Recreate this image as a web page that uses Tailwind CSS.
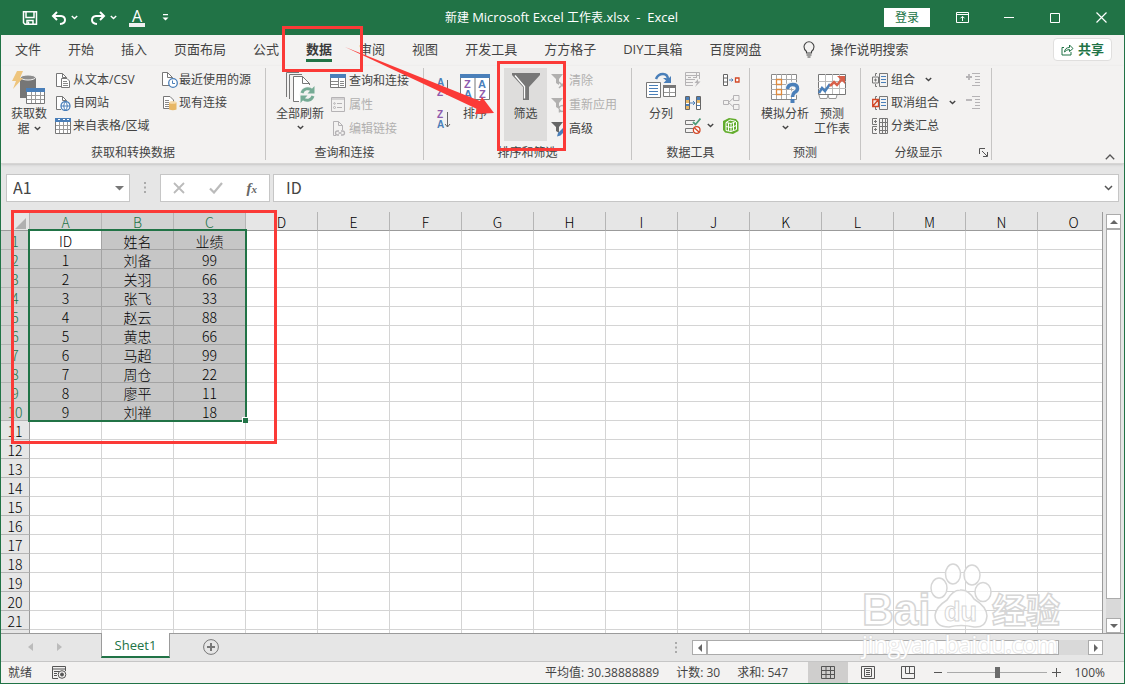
<!DOCTYPE html>
<html lang="zh-CN">
<head>
<meta charset="utf-8">
<title>新建 Microsoft Excel 工作表.xlsx - Excel</title>
<script src="https://cdn.jsdelivr.net/npm/@tailwindcss/browser@4"></script>
</head>
<body class="relative flex h-screen flex-col overflow-hidden border-x border-b border-[#217346] bg-[#e6e6e6] font-['Open_Sans','Noto_Sans_CJK_SC',sans-serif] text-xs text-[#444]">

<svg class="hidden">
  <symbol id="chev" viewBox="0 0 7 5"><path d="M.8 1 3.5 3.6 6.2 1" fill="none" stroke="currentColor" stroke-width="1.4"/></symbol>
  <symbol id="page" viewBox="0 0 16 16"><path d="M1.500 14.500V1.500H7.500L11.500 5.500V14.500Z" fill="#fff"/><path d="M6 14.500H1.500V1.500H7.500L11.500 5.500V7M7.500 1.500V5.500H11.500" fill="none" stroke="#777"/></symbol>
  <symbol id="funnel" viewBox="0 0 16 16"><path d="M0 1H12L8 6V12L5 10V6Z" fill="currentColor"/></symbol>
</svg>

<!-- Title bar -->
<header class="flex h-[35px] shrink-0 items-center bg-[#217346] text-white">
  <div class="flex w-[444px] shrink-0 items-center pl-[21px]">
    <button aria-label="保存" class="mr-[13px]"><svg width="16" height="16" viewBox="0 0 16 16" fill="none" stroke="#fff" stroke-width="1.5"><path d="M1.500 1.800H14.500V14.200H3L1.500 12.700Z"/><path d="M4 2V7.500H12V2M5 14V10.500H11V14"/><path d="M6.500 11.500V14" /></svg></button>
    <button aria-label="撤消"><svg width="16" height="16" viewBox="0 0 16 16" fill="none" stroke="#fff" stroke-width="2"><path d="M6 2 2 6 6 10M2.500 6H10Q14 6.500 14 10T9 14"/></svg></button>
    <button aria-label="撤消选项" class="mr-3 ml-1"><svg width="7" height="5"><use href="#chev"/></svg></button>
    <button aria-label="恢复"><svg width="16" height="16" viewBox="0 0 16 16" fill="none" stroke="#fff" stroke-width="2"><path d="M10 2 14 6 10 10M13.500 6H6Q2 6.500 2 10T7 14"/></svg></button>
    <button aria-label="恢复选项" class="mr-3 ml-1"><svg width="7" height="5"><use href="#chev"/></svg></button>
    <button aria-label="字体颜色" class="h-[18px] w-4 border-b-4 border-[#f0f0f0] text-center text-base leading-[14px]">A</button>
    <button aria-label="自定义快速访问工具栏" class="ml-[17px]"><svg width="7" height="7" viewBox="0 0 7 7" fill="#fff"><path d="M1 0H6V1.300H1ZM.5 3.500H6.500L3.500 6.500Z"/></svg></button>
  </div>
  <h1 class="whitespace-pre text-xs">新建 <span class="text-[13px]">Microsoft Excel </span>工作表<span class="text-[13px]">.xlsx  -  Excel</span></h1>
  <div class="flex flex-1 items-center justify-end pr-[17px]">
    <button class="h-[19px] w-[46px] bg-white leading-[18px] text-[#217346]">登录</button>
    <button aria-label="功能区显示选项" class="ml-[26px]"><svg width="13" height="11" viewBox="0 0 13 11" fill="none" stroke="#fff"><path d="M.5.5H12.500V10.500H.5ZM.5 2.500H12.500M6.500 9V4.500M4.500 6.300 6.500 4.300 8.500 6.300"/></svg></button>
    <button aria-label="最小化" class="ml-[35px]"><svg width="10" height="11" viewBox="0 0 10 11" stroke="#fff"><path d="M0 5.500H10"/></svg></button>
    <button aria-label="最大化" class="ml-9"><svg width="10" height="10" viewBox="0 0 10 10" fill="none" stroke="#fff"><path d="M.5.5H9.500V9.500H.5Z"/></svg></button>
    <button aria-label="关闭" class="ml-9"><svg width="11" height="11" viewBox="0 0 11 11" stroke="#fff" stroke-width="1.200"><path d="M.5.5 10.500 10.500M10.500.5.5 10.500"/></svg></button>
  </div>
</header>

<!-- Ribbon tabs -->
<nav class="flex h-[31px] shrink-0 items-center gap-[27px] bg-[#f3f2f1] pr-3 pb-0.5 pl-3.5 text-[13px] whitespace-nowrap">
  <button>文件</button><button>开始</button><button>插入</button><button>页面布局</button><button>公式</button>
  <button class="relative font-bold text-[#3b3b3b]">数据<span class="absolute inset-x-0 -bottom-1 h-[3px] bg-[#217346]"></span></button>
  <button>审阅</button><button>视图</button><button>开发工具</button><button>方方格子</button><button>DIY工具箱</button><button>百度网盘</button>
  <button class="ml-3.5 flex items-center gap-4"><svg width="12" height="17" viewBox="0 0 12 17" fill="none" stroke="currentColor" stroke-width="1.100"><path d="M3.500 12V10.500Q1 8.500 1 5.800A5 5 0 0 1 11 5.800Q11 8.500 8.500 10.500V12ZM3.500 14H8.500M4.500 16H7.500"/></svg>操作说明搜索</button>
  <button class="ml-auto flex h-[23px] w-[59px] items-center justify-center gap-1 rounded-sm border border-[#e0dfde] bg-white font-bold text-[#217346]"><svg width="13" height="13" viewBox="0 0 13 13" fill="none" stroke="currentColor"><path d="M3 4.500H1V12H10V9M3.500 9Q4 4.500 8.500 4.500V2L12 5.500 8.500 8.500V6.500Q5.500 6.500 3.500 9Z"/></svg>共享</button>
</nav>

<!-- Ribbon -->
<section class="flex h-[98px] shrink-0 border-b border-[#d6d5d4] bg-[#f3f2f1] pt-0.5 whitespace-nowrap shadow">
  <div class="flex h-[92px] w-[265px] shrink-0 flex-col justify-between border-r border-[#c6c5c4]">
    <div class="flex">
      <button class="flex h-[73px] w-[54px] flex-col items-center pt-[3px] pl-0.5 leading-[15px]">
        <svg width="34" height="33" viewBox="0 0 34 33"><path d="M8 7Q16 2 24 7V27H8Z" fill="#767676"/><ellipse cx="16" cy="6.500" rx="7.500" ry="2.500" fill="#8e8e8e" stroke="#f3f2f1"/><path d="M5 0H11L8 7H11L1 18 4 10H0Z" fill="#eec57d"/><path d="M14.500 17.500H32.500V32.500H14.500Z" fill="#fff" stroke="#777"/><path d="M14 17H33V21H14Z" fill="#4a7fb9"/><path d="M15 24.500H32M15 28.500H32M19.500 21V32M23.500 21V32M28.500 21V32" stroke="#999"/></svg>
        <span class="mt-0.5">获取数</span><span class="flex items-center gap-1">据 <svg width="7" height="5"><use href="#chev"/></svg></span>
      </button>
      <div class="w-[107px]">
        <button class="flex h-[23px] items-center gap-0.5"><svg width="16" height="16"><use href="#page"/><path d="M6.500 6.500H12L14.500 9V15.500H6.500Z" fill="#fff" stroke="#777"/><path d="M8 9.500H12M8 11.500H13M8 13.500H13" stroke="#888"/></svg>从文本/CSV</button>
        <button class="flex h-[23px] items-center gap-0.5"><svg width="16" height="16"><use href="#page"/><circle cx="10.500" cy="11" r="4.500" fill="#fff" stroke="#4a7fb9" stroke-width="1.300"/><path d="M6 11H15M10.500 6.500Q7 11 10.500 15.500Q14 11 10.500 6.500" fill="none" stroke="#4a7fb9"/></svg>自网站</button>
        <button class="flex h-[23px] items-center gap-0.5"><svg width="16" height="16"><path d="M.5.5H15.500V15.500H.5Z" fill="#fff" stroke="#777"/><path d="M0 0H16V4H0Z" fill="#4a7fb9"/><path d="M3 1.500H5M8 1.500H10M12 1.500H14" stroke="#fff"/><path d="M1 7.500H15M1 11.500H15M4.500 4V15M8.500 4V15M12.500 4V15" stroke="#999"/></svg>来自表格/区域</button>
      </div>
      <div>
        <button class="flex h-[23px] items-center"><svg width="17" height="16"><path d="M0.500 13.500V.5H5.500L10.500 5.500V13.500Z" fill="#fff" stroke="#777"/><path d="M5.500.5V5.500H10.500" fill="none" stroke="#777"/><circle cx="11" cy="11" r="4.300" fill="#fff" stroke="#4a7fb9" stroke-width="1.300"/><path d="M10.500 8.500V11.500H13" fill="none" stroke="#4a7fb9"/></svg>最近使用的源</button>
        <button class="flex h-[23px] items-center"><svg width="17" height="16"><path d="M1.500 1.500H8L11.500 5V13.500H1.500Z" fill="#fff" stroke="#777"/><path d="M3 5.500H7M3 7.500H7M3 9.500H7M3 11.500H7" stroke="#888"/><path d="M7 7.500Q11 5.500 14.500 7.500V14.500Q11 16 7 14.500Z" fill="#e8b765"/><ellipse cx="10.700" cy="7.500" rx="3.700" ry="1.300" fill="#f6dcae"/></svg>现有连接</button>
      </div>
    </div>
    <div class="h-4 text-center leading-[18px]">获取和转换数据</div>
  </div>

  <div class="flex h-[92px] w-[158px] shrink-0 flex-col justify-between border-r border-[#c6c5c4]">
    <div class="flex pl-1.5">
      <button class="flex h-[73px] w-14 flex-col items-center pt-[3px] leading-[15px]">
        <svg width="32" height="33" viewBox="0 0 32 33"><path d="M2.500 26V1.500H15M5.500 28V3.500H18" fill="none" stroke="#777"/><path d="M9.500 30.500V5.500H18.500L25.500 12.500V30.500Z" fill="#fff"/><path d="M15 30.500H9.500V5.500H18.500L25.500 12.500V14M18.500 5.500V12.500H25.500" fill="none" stroke="#777"/><circle cx="23.500" cy="23.500" r="8" fill="#f3f2f1"/><path d="M18 22A6 6 0 0 1 28 19.500M29 25A6 6 0 0 1 19 27.500" fill="none" stroke="#76ab95" stroke-width="3"/><path d="M30.500 15V22.500H23.500ZM16.500 32V24.500H23.500Z" fill="#76ab95"/></svg>
        <span class="mt-0.5">全部刷新</span><svg class="mt-1" width="7" height="5"><use href="#chev"/></svg>
      </button>
      <div class="pt-px pl-0.5">
        <button class="flex h-6 items-center gap-[3px]"><svg width="16" height="14"><path d="M.5.5H15.500V13.500H.5Z" fill="#fff" stroke="#777"/><path d="M0 0H16V4H0Z" fill="#4a7fb9"/><path d="M1 7.500H8M1 10.500H8M8.500 4V13M10 7.500H14M10 9.500H14M10 11.500H14" stroke="#888"/></svg>查询和连接</button>
        <button class="flex h-6 items-center gap-[3px] text-[#b1b0af]" disabled><svg width="16" height="16" fill="none" stroke="#b5b3b5"><path d="M1.500.5H14.500V14.500H1.500ZM1.500 2H14.500M7 6.500H12M7 10.500H12"/><circle cx="4.500" cy="6.500" r=".8"/><circle cx="4.500" cy="10.500" r="1"/></svg>属性</button>
        <button class="flex h-6 items-center gap-[3px] text-[#b1b0af]" disabled><svg width="16" height="16"><path d="M6 14.500H3.500V.5H8.500L12.500 4.500V9M8.500.5V4.500H12.500" fill="none" stroke="#b5b3b5"/><path d="M9 14H7.500A2 2 0 0 1 7.500 10H9M11 10H12.500A2 2 0 0 1 12.500 14H11M8.500 12H11.500" fill="none" stroke="#b5b3b5" stroke-width="1.300"/></svg>编辑链接</button>
      </div>
    </div>
    <div class="h-4 text-center leading-[18px]">查询和连接</div>
  </div>

  <div class="flex h-[92px] w-52 shrink-0 flex-col justify-between border-r border-[#c6c5c4]">
    <div class="flex pl-3">
      <div class="flex w-4 flex-col gap-3 pt-[10px]">
        <button aria-label="升序"><svg width="16" height="20" font-family="Liberation Sans" font-size="10" font-weight="bold"><text x="1" y="8" fill="#4a7fb9">A</text><text x="1" y="18" fill="#8e5aad">Z</text><path d="M11.500 2V17M9 14 11.500 17 14 14" fill="none" stroke="#666"/></svg></button>
        <button aria-label="降序"><svg width="16" height="20" font-family="Liberation Sans" font-size="10" font-weight="bold"><text x="1" y="8" fill="#8e5aad">Z</text><text x="1" y="18" fill="#4a7fb9">A</text><path d="M11.500 2V17M9 14 11.500 17 14 14" fill="none" stroke="#666"/></svg></button>
      </div>
      <button class="flex h-[73px] w-[46px] flex-col items-center pt-[3px] leading-[15px]">
        <svg width="30" height="33" viewBox="0 0 30 33" font-family="Liberation Sans" font-size="11" font-weight="bold"><path d="M.5 3.500H29.500V28.500H.5ZM15 6V28" fill="#fff" stroke="#777"/><path d="M0 3H30V7H0Z" fill="#4a7fb9"/><g fill="#8e5aad"><text x="4" y="17">Z</text><text x="19" y="27">Z</text></g><g fill="#4a7fb9"><text x="4" y="27">A</text><text x="18" y="17">A</text></g></svg>
        <span class="mt-0.5">排序</span>
      </button>
      <button class="ml-1.5 flex h-[73px] w-[43px] flex-col items-center bg-[#dedddc] pt-[3px] leading-[15px]">
        <svg width="28" height="33" viewBox="0 0 28 33"><path d="M0 2H28V4L17 16V29H11V16L0 4Z" fill="#777"/><path d="M3 4.500 12.500 15.500V27.500" fill="none" stroke="#fff" stroke-width="1.300"/></svg>
        <span class="mt-0.5">筛选</span>
      </button>
      <div class="pt-px pl-1">
        <button class="flex h-6 items-center gap-0.5 text-[#b1b0af]" disabled><svg width="16" height="16"><use href="#funnel"/><path d="M8 9 14 15M14 9 8 15" stroke="#b1b0af" stroke-width="1.500"/></svg>清除</button>
        <button class="flex h-6 items-center gap-0.5 text-[#b1b0af]" disabled><svg width="16" height="16"><use href="#funnel"/><path d="M8 11A3 3 0 0 1 13.500 10V7.500M14 12A3 3 0 0 1 8.500 13V15.500" fill="none" stroke="#b1b0af" stroke-width="1.500"/></svg>重新应用</button>
        <button class="flex h-6 items-center gap-0.5"><svg width="16" height="16"><use href="#funnel" color="#666"/><path d="M6 15.500 7 12 12 7 14.500 9.500 9.500 14.500Z" fill="#4a7fb9"/></svg>高级</button>
      </div>
    </div>
    <div class="h-4 text-center leading-[18px]">排序和筛选</div>
  </div>

  <div class="flex h-[92px] w-[118px] shrink-0 flex-col justify-between border-r border-[#c6c5c4]">
    <div class="flex pl-2">
      <button class="flex h-[73px] w-[42px] flex-col items-center pt-[3px] leading-[15px]">
        <svg width="30" height="33" viewBox="0 0 30 33"><path d="M.5 11.500H14.500V26.500H.5Z" fill="#fff" stroke="#777"/><path d="M3 14.500H12M3 17.500H12M3 20.500H12M3 23.500H12" stroke="#4a7fb9"/><path d="M17.500 14.500H29.500V25.500H17.500Z" fill="#fff" stroke="#777"/><path d="M17 14H30V17H17Z" fill="#777"/><path d="M18 21.500H29M23.500 17V25" stroke="#999"/><path d="M10 8Q12 3 17 3Q21.500 3 22 8" fill="none" stroke="#4a7fb9" stroke-width="2.500"/><path d="M17 7H20L22 8 25 5V12H17.500L20 9.500Z" fill="#4a7fb9"/></svg>
        <span class="mt-0.5">分列</span>
      </button>
      <div class="w-[38px] pl-[3px]">
        <button aria-label="快速填充" class="flex h-[23px] items-center"><svg width="16" height="15" fill="none" stroke="#b5b3b5"><path d="M8 13.500H.5V.5H14.500V7M.5 3.500H14M.5 7.500H10M.5 10.500H8M3 5.500H6M8 5.500H12M11.500 1V6"/><path d="M13 7 9.500 11H12L10 15 15.500 9.500H13Z" fill="#b5b3b5" stroke="none"/></svg></button>
        <button aria-label="删除重复值" class="flex h-[23px] items-center"><svg width="16" height="14"><path d="M.5.5H4.500V13.500H.5ZM11.500.5H15.500V13.500H11.500Z" fill="#fff" stroke="#666"/><path d="M1 1H4V4H1ZM1 8H4V10H1ZM12 1H15V4H12Z" fill="#4a7fb9"/><path d="M1 4H4V7H1ZM1 10H4V13H1ZM12 4H15V7H12Z" fill="#e8b765"/><path d="M5 7H10M8 5 10 7 8 9M12 9.500H15" fill="none" stroke="#4a7fb9"/></svg></button>
        <button aria-label="数据验证" class="flex h-[23px] items-center gap-1.5"><svg width="16" height="16"><path d="M10 2.500H.5V6.500H8M8 10.500H.5V14.500H8" fill="none" stroke="#777"/><path d="M8 4 10.500 6.500 15.500.5" fill="none" stroke="#4f9c78" stroke-width="1.800"/><circle cx="11.700" cy="12" r="3.300" fill="#fff" stroke="#d24726" stroke-width="1.300"/><path d="M9.500 10 14 14" stroke="#d24726" stroke-width="1.300"/></svg><svg width="7" height="5"><use href="#chev"/></svg></button>
      </div>
      <div class="pl-[3px]">
        <button aria-label="合并计算" class="flex h-[23px] items-center"><svg width="17" height="12"><path d="M.5.5H4.500V11.500H.5ZM.5 4H4.500M.5 8H4.500" fill="#fff" stroke="#666"/><path d="M6 6H10M8.500 4.500 10 6 8.500 7.500" fill="none" stroke="#4a7fb9"/><path d="M12.500 4H16V8H12.500Z" fill="#fff" stroke="#d24726" stroke-width="1.300"/></svg></button>
        <button aria-label="关系" class="flex h-[23px] items-center" disabled><svg width="17" height="15" fill="none" stroke="#b5b3b5"><path d="M.5 5.500H5.500V9.500H.5ZM10.500.5H16V5.500H10.500ZM10.500 9.500H16V14.500H10.500ZM5.500 7.500 10.500 3M5.500 7.500 10.500 12"/></svg></button>
        <button aria-label="管理数据模型" class="flex h-[23px] items-center"><svg width="16" height="16"><path d="M6 0 13 1 15.500 4V13L10 16 2 14.500 0 12V3Z" fill="#63ad2d"/><path d="M3 4.500 8 5.500 13 3.500 7 2ZM3 4.500V12.500L8 13.500V5.500M8 13.500 13.500 11.500V4M3 8.500 8 9.500 13.500 7.500M5.500 5V13M10.500 5V12.500" fill="none" stroke="#fff"/></svg></button>
      </div>
    </div>
    <div class="h-4 text-center leading-[18px]">数据工具</div>
  </div>

  <div class="flex h-[92px] w-[111px] shrink-0 flex-col justify-between border-r border-[#c6c5c4]">
    <div class="flex pl-2">
      <button class="flex h-[73px] w-[54px] flex-col items-center pt-[3px] leading-[15px]">
        <svg width="30" height="33" viewBox="0 0 30 33"><path d="M1.500 3.500H26.500V28.500H1.500Z" fill="#fff" stroke="#888"/><path d="M1 8.500H27M1 13.500H27M1 18.500H27M1 23.500H27M6.500 3V28M11.500 3V28M16.500 3V28M21.500 3V28" stroke="#aaa"/><path d="M6.500 8.500H11.500V13.500H6.500ZM6.500 18.500H11.500V23.500H6.500Z" fill="#fff" stroke="#e08a3c" stroke-width="1.300"/><path d="M17.500 18Q18 13.500 22.500 13.500Q27.500 13.500 27.500 17.500Q27.500 20 24.500 21.500Q22.500 23 22.500 26" fill="none" stroke="#f3f2f1" stroke-width="6"/><path d="M17.500 18Q18 13.500 22.500 13.500Q27.500 13.500 27.500 17.500Q27.500 20 24.500 21.500Q22.500 23 22.500 26" fill="none" stroke="#4a7fb9" stroke-width="3.500"/><path d="M20.500 28H24.500V32H20.500Z" fill="#4a7fb9"/></svg>
        <span class="mt-0.5">模拟分析</span><svg class="mt-1" width="7" height="5"><use href="#chev"/></svg>
      </button>
      <button class="flex h-[73px] w-[40px] flex-col items-center pt-[3px] leading-[15px]">
        <svg width="28" height="33" viewBox="0 0 28 33"><path d="M.5 3.500H27.500V23.500H.5Z" fill="#fff" stroke="#777"/><path d="M7.500 3V23M14.500 3V23M21.500 3V23M0 10.500H28M0 17.500H28" stroke="#bbb"/><path d="M1 24 2 27.500H9L10 24M10 24 11 27.500H18L19 24" fill="#fff" stroke="#999"/><path d="M1 22 4 17 7 20 12 13" fill="none" stroke="#4a7fb9" stroke-width="2.500"/><path d="M12 15 16 11 19 14 25 7" fill="none" stroke="#d8604a" stroke-width="2.500"/><path d="M19 5H27V13Z" fill="#d8604a"/></svg>
        <span class="mt-0.5">预测</span><span>工作表</span>
      </button>
    </div>
    <div class="h-4 text-center leading-[18px]">预测</div>
  </div>

  <div class="flex h-[92px] w-[131px] shrink-0 flex-col justify-between border-r border-[#c6c5c4]">
    <div class="flex justify-between pr-2.5 pl-[11px]">
      <div>
        <button class="flex h-[23px] items-center gap-[3px]"><svg width="16" height="14" fill="none" stroke="#777"><path d="M5 .5H3.500V3M3.500 11V13.500H5M.5 4H6.500V10H.5ZM2 7H5M3.500 5.500V8.500M7.500.5H15.500V13.500H7.500Z"/><path d="M9 3.500H14M9 6.500H14M9 9.500H14" stroke="#4a7fb9"/></svg>组合<svg class="ml-[7px]" width="7" height="5"><use href="#chev"/></svg></button>
        <button class="flex h-[23px] items-center gap-[3px]"><svg width="16" height="14" fill="none" stroke="#777"><path d="M5 .5H3.500V3M3.500 11V13.500H5M7.500.5H15.500V13.500H7.500Z"/><path d="M.7 3.500H6.500V10.500H.7ZM1 10 6 4" stroke="#d24726" stroke-width="1.300"/><path d="M9 3.500H14M9 6.500H14M9 9.500H14" stroke="#4a7fb9"/></svg>取消组合<svg class="ml-[7px]" width="7" height="5"><use href="#chev"/></svg></button>
        <button class="flex h-[23px] items-center gap-[3px]"><svg width="16" height="16" fill="none" stroke="#777"><path d="M5 .5H.5V6.500H5M5 8.500H.5V15.500H5M2 3.500H5M3.500 2V5M2 11.500H5M3.500 10V13M7.500.5H15.500V15.500H7.500ZM7.500 4.500H15M7.500 8.500H15M7.500 12.500H15M10.500.5V15M13.500.5V15"/></svg>分类汇总</button>
      </div>
      <div>
        <button aria-label="显示明细数据" class="flex h-[23px] items-center" disabled><svg width="15" height="13" fill="none" stroke="#b5b3b5"><path d="M0 4H6M3 1V7" stroke-width="1.800"/><path d="M6 .5H14M9 3.500H14M9 6.500H14M9 9.500H14M6 12.500H14"/></svg></button>
        <button aria-label="隐藏明细数据" class="flex h-[23px] items-center" disabled><svg width="15" height="13" fill="none" stroke="#b5b3b5"><path d="M0 4H6" stroke-width="1.800"/><path d="M6 .5H14M9 3.500H14M9 6.500H14M9 9.500H14M6 12.500H14"/></svg></button>
      </div>
    </div>
    <div class="flex h-4 items-center pr-[3px]"><span class="h-4 flex-1 pr-3.5 pl-[11px] text-center leading-[18px]">分级显示</span><button aria-label="分级显示设置"><svg width="9" height="9" fill="none" stroke="#555"><path d="M.5 6V.5H6M3 3 8 8M8.500 4V8.500H4"/></svg></button></div>
  </div>
  <button aria-label="折叠功能区" class="mr-[9px] mb-[3px] ml-auto self-end"><svg width="10" height="6" fill="none" stroke="#555" stroke-width="1.300"><path d="M.8 5.200 5 1 9.200 5.200"/></svg></button>
</section>

<!-- Formula bar -->
<div class="flex h-12 shrink-0 items-start gap-[3px] pt-2.5 pr-[5px] pl-[5px] font-['Noto_Sans_CJK_SC',sans-serif] text-base">
  <div class="flex h-7 w-[124px] items-center border border-[#c6c6c6] bg-white pr-[5px]">
    <input aria-label="名称框" value="A1" class="h-6 w-full min-w-0 pb-0.5 pl-1.5 outline-none">
    <button aria-label="名称列表"><svg width="9" height="5" fill="#777"><path d="M0 0H9L4.500 4.500Z"/></svg></button>
  </div>
  <div class="flex h-7 w-6 items-center justify-center"><svg width="3" height="12" fill="#aaa"><path d="M0 0H2V2H0ZM0 4.500H2V6.500H0ZM0 9H2V11H0Z"/></svg></div>
  <div class="flex h-7 w-[110px] items-center justify-between border border-[#c6c6c6] bg-white px-3">
    <button aria-label="取消"><svg width="12" height="12" stroke="#bbb" stroke-width="1.800"><path d="M1 1 11 11M11 1 1 11"/></svg></button>
    <button aria-label="输入"><svg width="14" height="12" fill="none" stroke="#bbb" stroke-width="2.200"><path d="M1 6.500 5 10.500 13 1"/></svg></button>
    <button aria-label="插入函数" class="font-['Liberation_Serif',serif] text-[15px] leading-none font-bold italic text-[#666]">f<span class="text-[11px]">x</span></button>
  </div>
  <div class="flex h-7 flex-1 items-center border border-[#c6c6c6] bg-white pr-[5px]">
    <input aria-label="编辑栏" value="ID" class="h-6 w-full min-w-0 pb-0.5 pl-3 outline-none">
    <button aria-label="展开编辑栏"><svg width="9" height="6" fill="none" stroke="#555" stroke-width="1.500"><path d="M1 1 4.500 4.500 8 1"/></svg></button>
  </div>
</div>

<!-- Worksheet -->
<main class="flex min-h-0 flex-1 border-b border-[#9b9b9b]">
  <div class="relative min-w-0 flex-1 overflow-hidden border-r border-[#9b9b9b] bg-white">
    <table class="w-[1109px] table-fixed border-separate border-spacing-0 text-center font-['Noto_Sans_CJK_SC',sans-serif] text-sm leading-4 font-light text-black">
      <thead><tr id="heads"></tr></thead>
      <tbody id="rows"></tbody>
    </table>
    <div class="absolute top-[17px] left-[27px] h-[193px] w-[219px] border-2 border-[#217346]"><span class="absolute -right-[3px] -bottom-[3px] size-[6px] border-t border-l border-white bg-[#217346]"></span></div>
  </div>
  <div class="mt-0.5 mr-[3px] ml-[3px] flex w-[15px] flex-col bg-[#d9d9d9]">
    <button aria-label="向上滚动" class="flex h-[15px] items-center justify-center border border-[#ababab] bg-white"><svg width="8" height="4" fill="#666"><path d="M0 4H8L4 0Z"/></svg></button>
    <div class="mb-[19px] flex-1 border border-[#ababab] bg-white"></div>
    <button aria-label="向下滚动" class="flex h-[15px] items-center justify-center border border-[#ababab] bg-white"><svg width="8" height="4" fill="#666"><path d="M0 0H8L4 4Z"/></svg></button>
  </div>
</main>

<!-- Sheet tabs and horizontal scroll -->
<div class="flex h-[27px] shrink-0 items-start">
  <div class="flex h-[26px] w-[100px] items-center justify-center gap-6 pr-[13px]">
    <button aria-label="上一个工作表"><svg width="5" height="8" fill="#bbb"><path d="M5 0V8L0 4Z"/></svg></button>
    <button aria-label="下一个工作表"><svg width="5" height="8" fill="#bbb"><path d="M0 0V8L5 4Z"/></svg></button>
  </div>
  <button class="-mt-px h-[25px] w-[69px] border-x border-b-2 border-x-[#9b9b9b] border-b-[#217346] bg-white text-[13px] leading-6 text-[#217346]">Sheet1</button>
  <button aria-label="新工作表" class="mt-[5px] ml-[33px]"><svg width="16" height="16" fill="none" stroke="#777"><circle cx="8" cy="8" r="7.400"/><path d="M4 8H12M8 4V12" stroke-width="2"/></svg></button>
  <svg class="mt-2 mr-[14px] ml-auto" width="3" height="12" fill="#aaa"><path d="M0 0H2V2H0ZM0 4.500H2V6.500H0ZM0 9H2V11H0Z"/></svg>
  <div class="mt-1.5 mr-[21px] flex h-[15px] w-[411px] bg-[#d9d9d9]">
    <button aria-label="向左滚动" class="flex w-[15px] shrink-0 items-center justify-center border border-[#ababab] bg-white"><svg width="4" height="8" fill="#666"><path d="M4 0V8L0 4Z"/></svg></button>
    <div class="mr-[29px] flex-1 border border-[#ababab] bg-white"></div>
    <button aria-label="向右滚动" class="flex w-[15px] shrink-0 items-center justify-center border border-[#ababab] bg-white"><svg width="4" height="8" fill="#666"><path d="M0 0V8L4 4Z"/></svg></button>
  </div>
</div>

<!-- Status bar -->
<footer class="flex h-[22px] shrink-0 items-center border-t border-[#c6c6c6] bg-[#f3f2f1] pr-[19px] pl-[7px] whitespace-nowrap">
  <span>就绪</span>
  <button aria-label="宏录制" class="ml-5"><svg width="15" height="13" fill="none" stroke="#555"><path d="M6 12.500H.5V.5H13.500V5M.5 3H13.500M2 5.500H7M2 7.500H5M2 9.500H5"/><circle cx="10" cy="8.500" r="3.800"/><circle cx="10" cy="8.500" r="1.500" fill="#555"/></svg></button>
  <div class="mr-5 ml-auto flex gap-[17px]"><span>平均值: 30.38888889</span><span>计数: 30</span><span>求和: 547</span></div>
  <button aria-label="普通" class="flex h-[21px] w-10 items-center justify-center bg-[#cfcecd]"><svg width="14" height="13" fill="none" stroke="#555"><path d="M.5.5H13.500V12.500H.5ZM.5 4.500H13.500M.5 8.500H13.500M5 .5V12M9.500.5V12"/></svg></button>
  <button aria-label="页面布局" class="flex h-[21px] w-10 items-center justify-center"><svg width="14" height="13" fill="none" stroke="#555"><path d="M.5.5H13.500V12.500H.5ZM3.500 2.500H10.500V10.500H3.500ZM5 4.500H9M5 6.500H9M5 8.500H9"/></svg></button>
  <button aria-label="分页预览" class="flex h-[21px] w-10 items-center justify-center"><svg width="14" height="13" fill="none" stroke="#555"><path d="M.5.500H13.500V12.500H.5ZM4.500.5V7.500H13M8.500.5V7.500"/></svg></button>
  <button aria-label="缩小" class="ml-1.5"><svg width="8" height="9" stroke="#555"><path d="M0 4.500H8"/></svg></button>
  <input type="range" aria-label="缩放" value="50" class="mx-[5px] h-[11px] w-[100px] appearance-none bg-[linear-gradient(#aaa,#aaa)] bg-[length:100%_1px] bg-center bg-no-repeat [&::-webkit-slider-thumb]:h-[11px] [&::-webkit-slider-thumb]:w-[5px] [&::-webkit-slider-thumb]:appearance-none [&::-webkit-slider-thumb]:bg-[#6b6b6b]">
  <button aria-label="放大"><svg width="9" height="9" stroke="#555"><path d="M0 4.500H9M4.500 0V9"/></svg></button>
  <span class="ml-3 w-8 text-right">100%</span>
</footer>

<!-- Watermark -->
<svg class="pointer-events-none absolute right-[50px] bottom-[18px]" width="215" height="106" viewBox="0 0 215 106" fill="#ffffff" fill-opacity=".8" stroke="#d6d6d6" font-family="'Open Sans','Noto Sans CJK SC',sans-serif">
  <text x="3" y="66" font-family="Liberation Sans" font-size="44" font-weight="bold" stroke-width="1.500">Bai</text>
  <g stroke-width="1.500"><ellipse cx="80" cy="29" rx="8" ry="10"/><ellipse cx="94" cy="15" rx="7.500" ry="10"/><ellipse cx="113" cy="16" rx="8" ry="10"/><ellipse cx="124" cy="33" rx="8" ry="9.500"/>
  <path d="M101 31Q109 30 115 40Q128 48 128 57Q127 69 115 68Q102 65 90 68Q76 68 76 56Q77 48 88 41Q94 31 101 31Z"/></g>
  <text x="85" y="62" font-size="27" font-weight="bold" font-family="Liberation Sans">du</text>
  <text x="133" y="64" font-size="34" font-weight="bold" stroke-width="1.500">经验</text>
  <text x="3" y="94" font-size="23" stroke-width="2" stroke-opacity=".6" paint-order="stroke" fill-opacity="1">jingyan.baidu.com</text>
</svg>

<!-- Tutorial marks -->
<div class="pointer-events-none absolute top-[26px] left-[281px] h-[46px] w-[81px] border-3 border-[#fb3a37]"></div>
<div class="pointer-events-none absolute top-[61px] left-[496px] h-[90px] w-[69px] border-3 border-[#fb3a37]"></div>
<div class="pointer-events-none absolute top-[210px] left-[10px] h-[234px] w-[266px] border-3 border-[#fb3a37]"></div>
<svg class="pointer-events-none absolute top-[46px] left-[343px]" width="154" height="72" fill="#fb3a37"><path d="M1 1 136 55 138 51 150 67 131 68 133 63Z"/></svg>

<script>
const data = [['ID','姓名','业绩'],[1,'刘备',99],[2,'关羽',66],[3,'张飞',33],[4,'赵云',88],[5,'黄忠',66],[6,'马超',99],[7,'周仓',22],[8,'廖平',11],[9,'刘禅',18]];
const letters = 'ABCDEFGHIJKLMNO'.split('');
const corner = '<th class="h-[19px] w-[29px] border-r border-b border-[#b5b5b5] border-b-[#9b9b9b] bg-[#e6e6e6] p-0"><svg class="mt-1 ml-auto mr-[3px]" width="11" height="11" fill="#b0b0b0"><path d="M11 0V11H0Z"/></svg></th>';
document.getElementById('heads').innerHTML = corner + letters.map((l, i) => i < 3
  ? `<th scope="col" class="h-[19px] border-r border-b border-[#b5b5b5] border-b-[#9b9b9b] bg-[#d2d2d2] p-0 pt-0.5 font-light text-[#217346]">${l}</th>`
  : `<th scope="col" class="h-[19px] border-r border-b border-[#b5b5b5] border-b-[#9b9b9b] bg-[#e6e6e6] p-0 pt-0.5 font-light">${l}</th>`).join('');
let html = '';
for (let r = 0; r < 22; r++) {
  html += r < 10
    ? `<tr><th scope="row" class="h-[19px] border-r border-b border-[#b5b5b5] border-r-[#9b9b9b] bg-[#d2d2d2] p-0 pt-0.5 font-light text-[#217346]">${r + 1}</th>`
    : `<tr><th scope="row" class="h-[19px] border-r border-b border-[#b5b5b5] border-r-[#9b9b9b] bg-[#e6e6e6] p-0 pt-0.5 font-light">${r < 21 ? r + 1 : ''}</th>`;
  for (let c = 0; c < 15; c++) {
    if (r === 0 && c === 0) html += '<td class="border-r border-b border-[#a3a3a3] bg-white p-0 pt-0.5">ID</td>';
    else if (r < 10 && c < 3) html += `<td class="border-r border-b border-[#a3a3a3] bg-[#c6c6c6] p-0 pt-0.5">${data[r][c]}</td>`;
    else html += '<td class="border-r border-b border-[#d4d4d4] p-0"></td>';
  }
  html += '</tr>';
}
document.getElementById('rows').innerHTML = html;
</script>
</body>
</html>
